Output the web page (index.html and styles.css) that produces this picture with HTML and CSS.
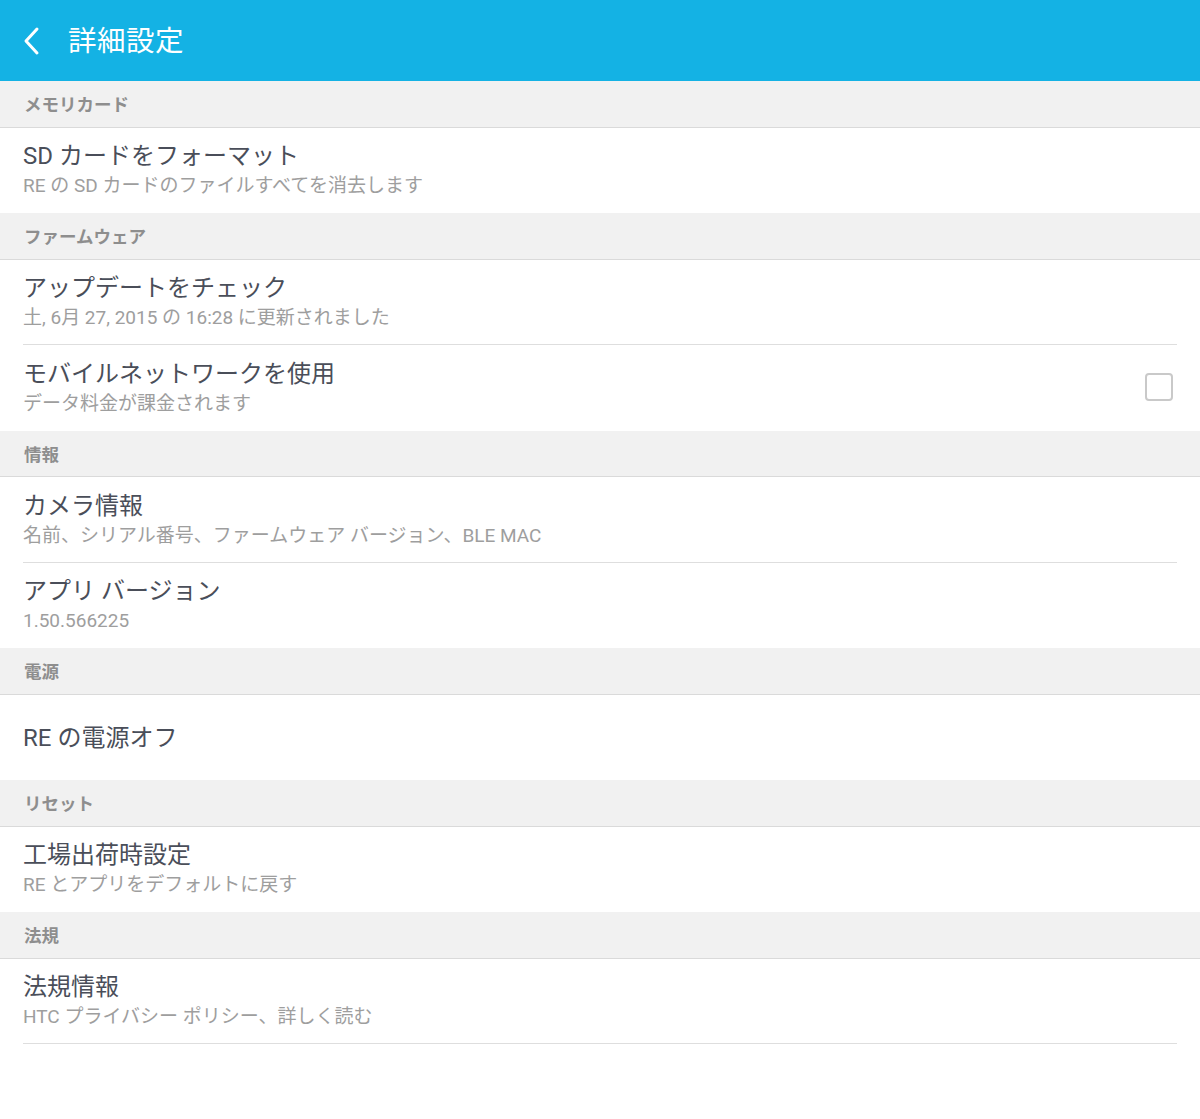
FILE: index.html
```
<!DOCTYPE html>
<html lang="ja">
<head>
<meta charset="utf-8">
<title>詳細設定</title>
<link rel="stylesheet" href="styles.css">
</head>
<body>
<header class="appbar">
  <svg class="back" width="20" height="30" viewBox="0 0 20 30"><path d="M15 3 L4 15 L15 27" fill="none" stroke="#fff" stroke-width="3" stroke-linecap="round" stroke-linejoin="round"/></svg>
  <h1 class="appbar-title">詳細設定</h1>
</header>
<main>
  <section class="group">
    <div class="group-head">メモリカード</div>
    <div class="item"><div class="text"><div class="title">SD カードをフォーマット</div><div class="sub">RE の SD カードのファイルすべてを消去します</div></div></div>
  </section>
  <section class="group">
    <div class="group-head">ファームウェア</div>
    <div class="item"><div class="text"><div class="title">アップデートをチェック</div><div class="sub">土, 6月 27, 2015 の 16:28 に更新されました</div></div></div>
    <div class="item"><div class="text"><div class="title">モバイルネットワークを使用</div><div class="sub">データ料金が課金されます</div></div><span class="check"></span></div>
  </section>
  <section class="group">
    <div class="group-head">情報</div>
    <div class="item"><div class="text"><div class="title">カメラ情報</div><div class="sub">名前、シリアル番号、ファームウェア バージョン、BLE MAC</div></div></div>
    <div class="item"><div class="text"><div class="title">アプリ バージョン</div><div class="sub">1.50.566225</div></div></div>
  </section>
  <section class="group">
    <div class="group-head">電源</div>
    <div class="item"><div class="text"><div class="title">RE の電源オフ</div></div></div>
  </section>
  <section class="group">
    <div class="group-head">リセット</div>
    <div class="item"><div class="text"><div class="title">工場出荷時設定</div><div class="sub">RE とアプリをデフォルトに戻す</div></div></div>
  </section>
  <section class="group last">
    <div class="group-head">法規</div>
    <div class="item"><div class="text"><div class="title">法規情報</div><div class="sub">HTC プライバシー ポリシー、詳しく読む</div></div></div>
  </section>
</main>
</body>
</html>
```
FILE: styles.css
```
* { box-sizing: border-box; }
html, body { margin: 0; padding: 0; background: #fff; }
body { font-family: Roboto, "Noto Sans CJK JP", sans-serif; width: 1200px; }

.appbar {
  height: 81px;
  background: #14b2e4;
  display: flex;
  align-items: center;
  padding-left: 22px;
}
.back { display: block; margin-right: 26px; }
.appbar-title {
  margin: 0;
  padding-top: 3px;
  color: #fff;
  font-size: 28.5px;
  font-weight: 400;
  letter-spacing: 0.5px;
  line-height: 1;
}

.group-head {
  height: 46.5px;
  background: #f1f1f1;
  border-bottom: 1px solid #dadada;
  display: flex;
  align-items: center;
  padding-left: 24px;
  font-size: 17.5px;
  font-weight: 700;
  color: #8e8e8e;
}

.item {
  height: 85.5px;
  margin: 0 23px;
  border-bottom: 1px solid #dedede;
  display: flex;
  align-items: center;
  justify-content: space-between;
}
.group .item:last-child { border-bottom-color: transparent; }
.group.last .item:last-child { border-bottom-color: #dedede; }

.text { display: flex; flex-direction: column; padding-top: 3px; }
.title {
  font-size: 24px;
  line-height: 30px;
  color: #4a4e59;
}
.sub {
  font-size: 19px;
  line-height: 30px;
  color: #9e9e9e;
}

.check {
  width: 28px;
  height: 28px;
  border: 2px solid #c9c9c9;
  border-radius: 4px;
  margin-right: 4px;
}
```
